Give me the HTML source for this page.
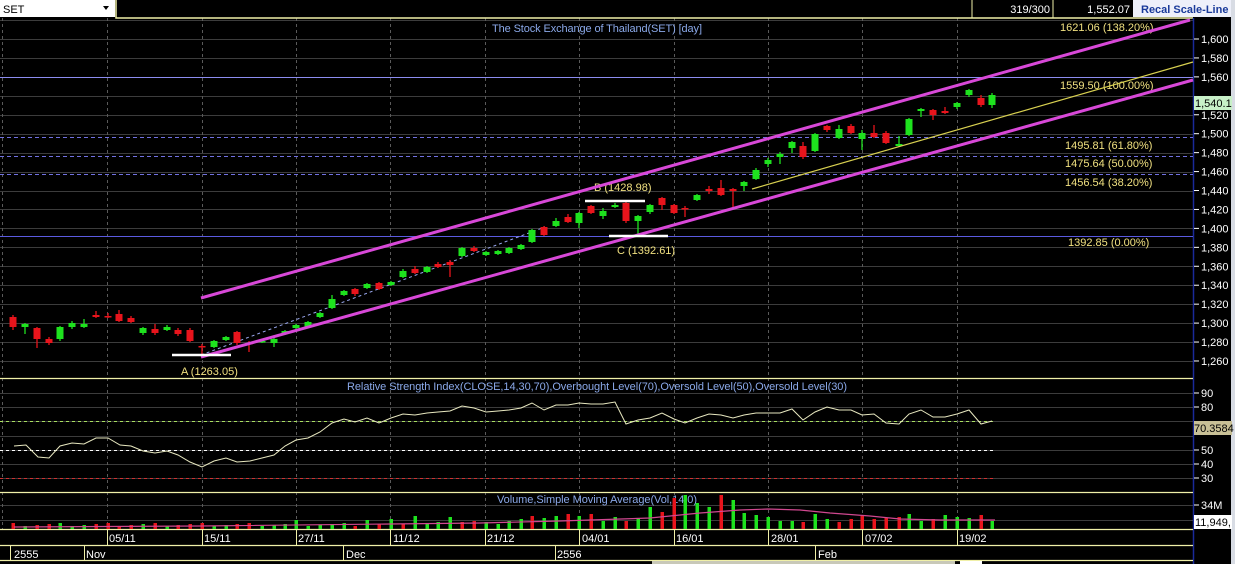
<!DOCTYPE html>
<html><head><meta charset="utf-8"><style>
html,body{margin:0;padding:0;background:#000;width:1235px;height:564px;overflow:hidden}
svg{display:block}
text{font-family:"Liberation Sans",sans-serif;font-size:11px}
</style></head><body>
<svg id="s" width="1235" height="564" viewBox="0 0 1235 564" xmlns="http://www.w3.org/2000/svg">
<rect width="1235" height="564" fill="#000"/>
<g id="grid"></g>
<!-- top bar -->
<rect x="0" y="0" width="115" height="17" fill="#fff"/>
<text x="3" y="13" fill="#000" font-size="11">SET</text>
<path d="M103 6h6l-3 4z" fill="#000"/>
<path d="M116 0V18H1193" stroke="#f0f0a8" stroke-width="1.5" fill="none"/>
<path d="M972 0V18M1053 0V18" stroke="#f0f0a8" stroke-width="1"/>
<text x="1050" y="13" fill="#fff" text-anchor="end">319/300</text>
<text x="1130" y="13" fill="#fff" text-anchor="end">1,552.07</text>
<rect x="1133" y="0" width="98" height="17" fill="#eef0fa"/>
<text x="1141" y="13" fill="#1a3a9a" font-weight="bold" font-size="11.5">Recal Scale-Line</text>
<rect x="1231" y="0" width="4" height="564" fill="#d8dce4"/>
<!-- right axis -->
<line x1="1193.5" y1="18" x2="1193.5" y2="564" stroke="#1a2a9a" stroke-width="1.5"/>
<g id="axis"></g>
<!-- fib lines -->
<line x1="0" y1="77.5" x2="1193" y2="77.5" stroke="#8c8cf0"/>
<line x1="0" y1="236.5" x2="1193" y2="236.5" stroke="#5a5ae0"/>
<g stroke="#7070e0" stroke-dasharray="4,3">
<line x1="0" y1="137.5" x2="1193" y2="137.5"/>
<line x1="0" y1="156.5" x2="1193" y2="156.5"/>
<line x1="0" y1="174.5" x2="1193" y2="174.5"/>
</g>
<text x="492" y="32" fill="#8aa8e8" textLength="210">The Stock Exchange of Thailand(SET) [day]</text>
<g fill="#f0e080">
<text x="1060" y="31">1621.06 (138.20%)</text>
<text x="1060" y="89">1559.50 (100.00%)</text>
<text x="1065" y="149">1495.81 (61.80%)</text>
<text x="1065" y="167">1475.64 (50.00%)</text>
<text x="1065" y="186">1456.54 (38.20%)</text>
<text x="1068" y="246">1392.85 (0.00%)</text>
<text x="181" y="375">A (1263.05)</text>
<text x="594" y="191">B (1428.98)</text>
<text x="617" y="254">C (1392.61)</text>
</g>
<line x1="201" y1="355" x2="545" y2="227" stroke="#9aa8f0" stroke-dasharray="3,3"/>
<g id="candles"></g>
<g stroke="#d848d8" stroke-width="3">
<line x1="201" y1="298" x2="1190" y2="20"/>
<line x1="201" y1="357" x2="1193" y2="80"/>
</g>
<line x1="752" y1="189" x2="1193" y2="62" stroke="#d8d050" stroke-width="1.2"/>
<g stroke="#fff" stroke-width="2.5">
<line x1="172" y1="355" x2="231" y2="355"/>
<line x1="585" y1="201" x2="645" y2="201"/>
<line x1="609" y1="236" x2="668" y2="236"/>
</g>
<!-- pane separators -->
<g stroke="#f0f0a8" stroke-width="1.3">
<line x1="0" y1="378.5" x2="1193" y2="378.5"/>
<line x1="0" y1="492.5" x2="1193" y2="492.5"/>
<line x1="0" y1="529.5" x2="1193" y2="529.5"/>
<line x1="0" y1="545.5" x2="1193" y2="545.5"/>
<line x1="0" y1="560.5" x2="1193" y2="560.5"/>
</g>
<text x="347" y="390" fill="#8aa8e8" textLength="500">Relative Strength Index(CLOSE,14,30,70),Overbought Level(70),Oversold Level(50),Oversold Level(30)</text>
<line x1="0" y1="421.5" x2="995" y2="421.5" stroke="#a8e060" stroke-dasharray="3,3"/>
<line x1="0" y1="450.5" x2="995" y2="450.5" stroke="#fff" stroke-dasharray="3,3"/>
<line x1="0" y1="478.5" x2="995" y2="478.5" stroke="#d03030" stroke-dasharray="3,3"/>
<polyline id="rsi" fill="none" stroke="#e8e8c0" stroke-width="1"/>
<text x="497" y="503" fill="#8aa8e8" textLength="200">Volume,Simple Moving Average(Vol,14,0)</text>
<g id="vol"></g>
<polyline id="ma" fill="none" stroke="#d04890" stroke-width="1.2"/>
<!-- date labels -->
<g fill="#fff">
<text x="109" y="542">05/11</text><text x="204" y="542">15/11</text><text x="298" y="542">27/11</text>
<text x="393" y="542">11/12</text><text x="487" y="542">21/12</text><text x="582" y="542">04/01</text>
<text x="676" y="542">16/01</text><text x="771" y="542">28/01</text><text x="865" y="542">07/02</text>
<text x="959" y="542">19/02</text>
<text x="14" y="558">2555</text><text x="86" y="558">Nov</text><text x="346" y="558">Dec</text>
<text x="557" y="558">2556</text><text x="818" y="558">Feb</text>
</g>
<g stroke="#f0f0a8"><path d="M10.5 545V560M84.5 545V560M343.5 545V560M555.5 545V560M815.5 545V560"/>
<path d="M107.5 530V545M202.5 530V545M296.5 530V545M390.5 530V545M485.5 530V545M579.5 530V545M674.5 530V545M768.5 530V545M862.5 530V545M957.5 530V545"/></g>
<rect x="652" y="561" width="303" height="3" fill="#c8c8b8"/>
<rect x="960" y="561" width="22" height="3" fill="#fff"/>
<!-- right boxes -->
<rect x="1194" y="96" width="38" height="14" fill="#c8f0c8"/>
<text x="1195" y="107" fill="#000">1,540.1</text>
<rect x="1194" y="421" width="38" height="14" fill="#c8c096"/>
<text x="1194" y="432" fill="#000">70.3584</text>
<rect x="1194" y="515" width="38" height="14" fill="#fff"/>
<text x="1195" y="526" fill="#000">11,949,</text>
</svg>
<script>
var NS="http://www.w3.org/2000/svg";
function el(p,t,a,txt){var e=document.createElementNS(NS,t);for(var k in a)e.setAttribute(k,a[k]);if(txt)e.textContent=txt;document.getElementById(p).appendChild(e);return e;}
// grid
for(var p=1260;p<=1620;p+=20){var y=Math.round(39+(1600-p)*0.947)+.5;el("grid","line",{x1:0,x2:1193,y1:y,y2:y,stroke:"#3c3c3c"});}
[393,407,421,436,450,464,478,505,520].forEach(function(y){el("grid","line",{x1:0,x2:1193,y1:y+.5,y2:y+.5,stroke:"#3c3c3c"});});
[2,107,202,296,390,485,579,674,768,862,957].forEach(function(x){el("grid","line",{x1:x+.5,x2:x+.5,y1:18,y2:529,stroke:"#5a5a5a","stroke-dasharray":"3,3"});});
// axis labels
for(var p=1260;p<=1600;p+=20){if(p==1540)continue;var y=39+(1600-p)*0.947;el("axis","line",{x1:1194,x2:1199,y1:y,y2:y,stroke:"#fff"});el("axis","text",{x:1201,y:y+4,fill:"#fff"},(p+"").replace(/(\d)(\d{3})/,"$1,$2"));}
[[90,393],[80,407],[50,450],[40,464],[30,478]].forEach(function(a){el("axis","line",{x1:1194,x2:1199,y1:a[1],y2:a[1],stroke:"#fff"});el("axis","text",{x:1201,y:a[1]+4,fill:"#fff"},a[0]);});
el("axis","line",{x1:1194,x2:1199,y1:505,y2:505,stroke:"#fff"});el("axis","text",{x:1201,y:509,fill:"#fff"},"34M");
// candles [x, bodyTop, bodyBot, hi, lo, g/r]
var C=[[13,317,327,315,330,0],[25,324,327,323,334,1],[37,328,339,327,348,0],[49,339,343,337,345,0],[60,327,339,326,341,1],[72,323,327,321,329,1],[84,324,327,319,328,1],[96,315,317,311,318,0],[108,316,317,313,318,0],[119,314,321,310,322,0],[131,318,322,316,323,0],[143,328,333,327,335,1],[155,329,333,324,335,0],[167,327,330,325,331,1],[178,330,334,328,336,0],[190,330,341,328,342,0],[202,346,347,344,356,0],[214,341,347,340,348,1],[226,337,340,336,341,1],[237,332,343,331,345,0],[249,343,344,341,352,0],[262,341,342,340,343,1],[274,339,343,338,347,1],[285,331,334,330,335,1],[296,325,328,324,329,1],[308,322,327,321,328,1],[320,313,317,312,318,1],[332,299,308,295,309,1],[344,291,295,290,296,1],[355,289,294,288,296,0],[367,284,288,283,289,1],[379,283,289,282,290,0],[391,282,285,281,286,1],[403,271,277,269,278,1],[415,269,273,266,274,0],[427,267,272,266,273,1],[438,264,267,262,268,0],[450,262,265,260,277,0],[462,248,256,247,257,1],[474,248,251,246,252,0],[486,252,255,251,256,1],[498,251,254,250,255,1],[509,248,253,247,254,1],[521,245,249,244,250,1],[532,230,242,229,243,1],[544,227,235,226,236,0],[556,221,226,218,227,1],[568,217,222,214,223,0],[579,213,223,212,228,1],[591,206,213,205,214,0],[603,211,216,208,219,1],[615,205,207,203,208,1],[626,203,221,202,223,0],[638,216,221,215,234,1],[650,205,212,204,214,1],[662,198,205,197,210,0],[674,205,213,204,214,0],[685,208,209,206,217,0],[697,195,200,194,201,1],[709,189,191,186,194,0],[721,188,195,180,196,0],[733,189,191,188,207,0],[744,182,186,181,191,1],[756,170,179,168,180,1],[768,160,164,158,167,1],[780,154,157,152,164,1],[792,142,148,141,153,1],[803,146,157,142,159,0],[815,134,151,133,152,1],[827,126,130,125,132,0],[839,129,138,125,139,1],[851,126,133,124,134,0],[862,133,139,130,150,1],[874,133,137,125,138,0],[886,133,143,131,144,0],[899,144,146,136,147,1],[909,119,135,118,136,1],[921,109,111,108,117,1],[933,110,115,109,120,0],[945,111,113,107,114,0],[957,103,107,102,109,1],[969,90,95,89,97,1],[981,98,105,95,107,0],[992,95,105,93,108,1]];
C.forEach(function(c){var col=c[5]?"#1ee21e":"#e8141c";el("candles","line",{x1:c[0],x2:c[0],y1:c[3],y2:c[4],stroke:col,"stroke-width":1.3});var h=Math.max(c[2]-c[1],1.5);el("candles","rect",{x:c[0]-3.5,y:c[1],width:7,height:h,fill:col});});
// rsi
var R=[[14,446],[26,445],[38,457],[49,458],[60,446],[72,443],[84,444],[96,438],[108,438],[120,445],[131,446],[143,451],[155,453],[167,451],[178,455],[190,462],[202,467],[214,461],[226,458],[237,462],[250,461],[262,458],[274,455],[285,446],[296,440],[308,438],[320,432],[332,423],[344,419],[355,422],[367,418],[379,423],[391,418],[403,414],[415,415],[427,413],[438,412],[450,411],[462,406],[474,408],[486,412],[498,411],[509,410],[521,408],[532,403],[544,410],[556,405],[568,405],[579,403],[591,404],[603,404],[615,402],[626,424],[638,420],[650,418],[662,413],[674,419],[685,423],[697,418],[709,414],[721,415],[733,418],[744,415],[756,413],[768,413],[780,413],[792,409],[803,420],[815,412],[827,407],[839,410],[851,410],[862,415],[874,414],[886,423],[899,424],[909,414],[921,410],[933,417],[945,417],[957,414],[969,410],[981,424],[992,421]];
document.getElementById("rsi").setAttribute("points",R.map(function(p){return p.join(",")}).join(" "));
// volume
var V={391:[519,1],403:[524,0],415:[516,1],427:[523,1],438:[522,1],450:[517,1],462:[522,0],474:[521,0],486:[522,1],498:[524,1],509:[521,1],521:[519,1],532:[516,0],544:[518,1],556:[516,1],568:[514,0],579:[516,1],591:[514,0],603:[521,1],615:[517,1],626:[521,0],638:[519,1],650:[507,1],662:[512,0],674:[498,0],685:[495,1],697:[503,1],709:[507,1],721:[495,0],733:[500,1],744:[513,1],756:[515,1],768:[517,1],780:[521,1],792:[521,1],803:[522,0],815:[514,1],827:[519,1],839:[522,0],851:[519,0],862:[516,0],874:[519,0],886:[518,0],899:[517,0],909:[514,1],921:[521,1],933:[519,0],945:[515,1],957:[517,1],969:[518,1],981:[515,0],992:[521,1]};
C.forEach(function(c,i){var v=V[c[0]];var top,g;if(v){top=v[0];g=v[1];}else{top=523+((i*7)%4);g=c[5];if(i==24||i==30)top=520;}el("vol","rect",{x:c[0]-1.5,y:top,width:3.5,height:529-top,fill:g?"#1ee21e":"#e8141c"});});
document.getElementById("ma").setAttribute("points","14,527 200,526 390,524 480,523 560,521 650,518 700,513 740,510 768,509 800,510 830,513 870,516 900,519 940,520 995,520");
</script>
</body></html>
